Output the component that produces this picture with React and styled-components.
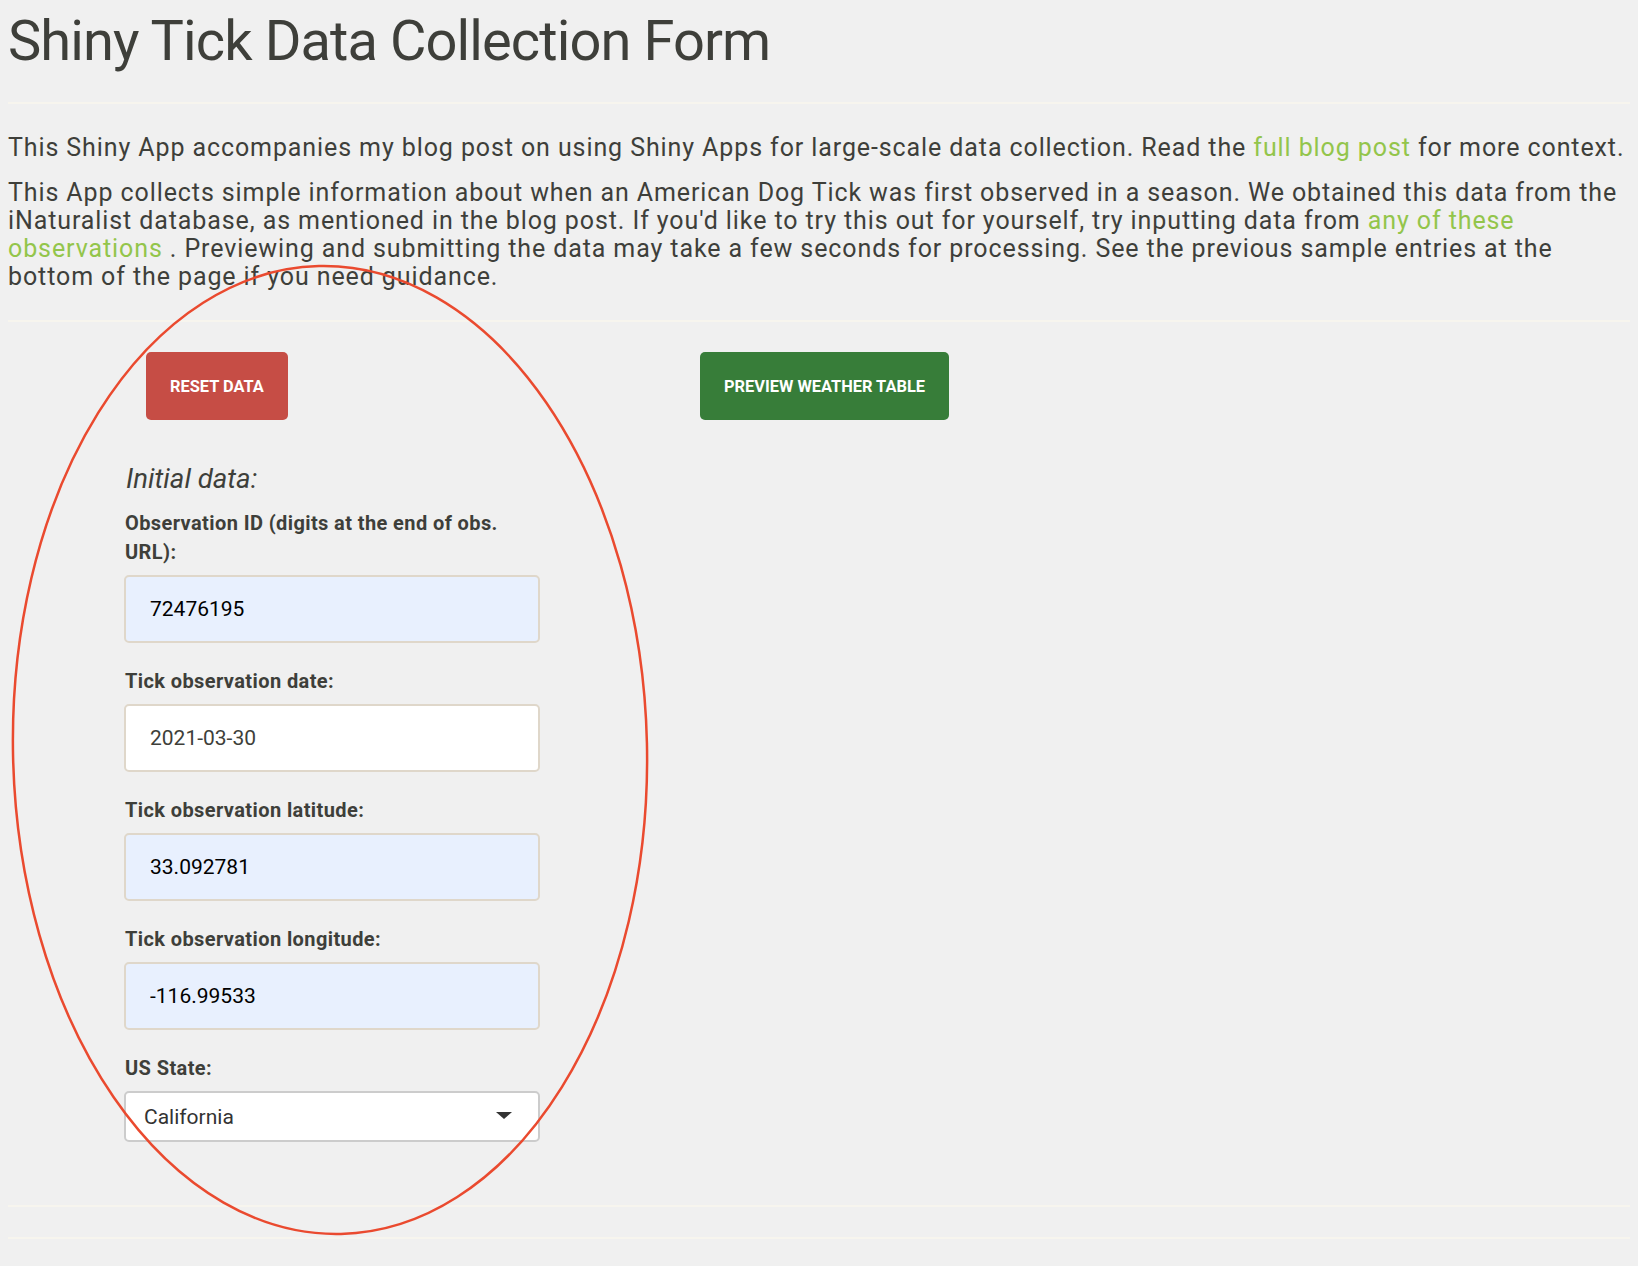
import React from "react";
import styled, { createGlobalStyle } from "styled-components";

const GlobalStyle = createGlobalStyle`
  html, body {
    margin: 0;
    padding: 0;
    background: #f0f0f0;
  }
  body {
    font-family: Roboto, "Noto Sans", "Liberation Sans", sans-serif;
    color: #3e3f3a;
  }
  * { box-sizing: border-box; }
`;

const Page = styled.div`
  position: relative;
  padding: 0 8px;
  min-height: 1266px;
  display: flow-root;
`;

const Title = styled.h1`
  margin: 10px 0 0;
  font-size: 56px;
  line-height: 63px;
  letter-spacing: -0.9px;
  font-weight: 400;
  color: #3e3f3a;
`;

const Rule = styled.hr`
  margin: 29px 0 30px;
  height: 0;
  border: 0;
  border-top: 2px solid #f7f5ee;
`;

const Para = styled.p`
  margin: 0 0 17px;
  font-size: 25px;
  line-height: 28px;
  letter-spacing: 0.9px;
  color: #3e3f3a;
`;

const Link = styled.a`
  color: #93c54b;
  text-decoration: none;
`;

const ButtonRow = styled.div`
  display: grid;
  grid-template-columns: 554px auto;
  justify-items: start;
  padding-left: 138px;
`;

const Button = styled.button`
  height: 68px;
  padding: 0 24px;
  border: none;
  border-radius: 5px;
  background: ${(p) => p.$bg};
  color: #ffffff;
  font-family: Roboto, "Noto Sans", sans-serif;
  font-size: 16.4px;
  font-weight: 700;
  text-transform: uppercase;
  cursor: pointer;
`;

const FormColumn = styled.div`
  width: 416px;
  margin-left: 116px;
  padding-bottom: 10px;
`;

const SectionHeading = styled.div`
  margin: 43px 0 14px 2px;
  font-size: 27.6px;
  line-height: 32px;
  font-style: italic;
  color: #3e3f3a;
`;

const Field = styled.div`
  margin-bottom: 24px;
`;

const Label = styled.label`
  display: block;
  margin: 0 0 8px 1px;
  font-size: 20px;
  line-height: 29px;
  letter-spacing: 0.4px;
  font-weight: 700;
  color: #3e3f3a;
`;

const TextInput = styled.input`
  display: block;
  width: 100%;
  height: 68px;
  padding: 0 24px;
  border: 2px solid #dfd7ca;
  border-radius: 5px;
  background: ${(p) => (p.$filled ? "#e8f0fe" : "#ffffff")};
  color: ${(p) => (p.$filled ? "#000000" : "#3e3f3a")};
  font-family: Roboto, "Noto Sans", sans-serif;
  font-size: 21px;
  outline: none;
`;

const SelectBox = styled.div`
  display: flex;
  align-items: center;
  justify-content: space-between;
  height: 51px;
  padding: 0 26px 0 18px;
  border: 2px solid #cccccc;
  border-radius: 5px;
  background: #ffffff;
  color: #333333;
  font-size: 21px;
`;

const Caret = styled.span`
  width: 0;
  height: 0;
  margin-top: -3px;
  border-left: 8px solid transparent;
  border-right: 8px solid transparent;
  border-top: 7px solid #333333;
`;

const Annotation = styled.svg`
  position: absolute;
  top: 0;
  left: 0;
  pointer-events: none;
`;

const fields = [
  { label: "Observation ID (digits at the end of obs. URL):", value: "72476195", filled: true },
  { label: "Tick observation date:", value: "2021-03-30", filled: false },
  { label: "Tick observation latitude:", value: "33.092781", filled: true },
  { label: "Tick observation longitude:", value: "-116.99533", filled: true },
];

export default function App() {
  return (
    <>
      <GlobalStyle />
      <Page>
        <Title>Shiny Tick Data Collection Form</Title>
        <Rule />
        <Para>
          This Shiny App accompanies my blog post on using Shiny Apps for large-scale data collection. Read the{" "}
          <Link href="#">full blog post</Link> for more context.
        </Para>
        <Para>
          This App collects simple information about when an American Dog Tick was first observed in a season. We
          obtained this data from the iNaturalist database, as mentioned in the blog post. If you'd like to try this out
          for yourself, try inputting data from <Link href="#">any of these observations</Link> . Previewing and
          submitting the data may take a few seconds for processing. See the previous sample entries at the bottom of the
          page if you need guidance.
        </Para>
        <Rule />
        <ButtonRow>
          <Button $bg="#c64d45">Reset data</Button>
          <Button $bg="#377d39">Preview weather table</Button>
        </ButtonRow>
        <FormColumn>
          <SectionHeading>Initial data:</SectionHeading>
          {fields.map((f) => (
            <Field key={f.label}>
              <Label>{f.label}</Label>
              <TextInput defaultValue={f.value} $filled={f.filled} readOnly />
            </Field>
          ))}
          <Field>
            <Label>US State:</Label>
            <SelectBox>
              <span>California</span>
              <Caret />
            </SelectBox>
          </Field>
        </FormColumn>
        <Rule />
        <Rule />
        <Annotation width="1638" height="1266" viewBox="0 0 1638 1266">
          <ellipse
            cx="330"
            cy="750"
            rx="317"
            ry="484"
            fill="none"
            stroke="#ea4a2f"
            strokeWidth="2.5"
            transform="rotate(-1.3 330 750)"
          />
        </Annotation>
      </Page>
    </>
  );
}
